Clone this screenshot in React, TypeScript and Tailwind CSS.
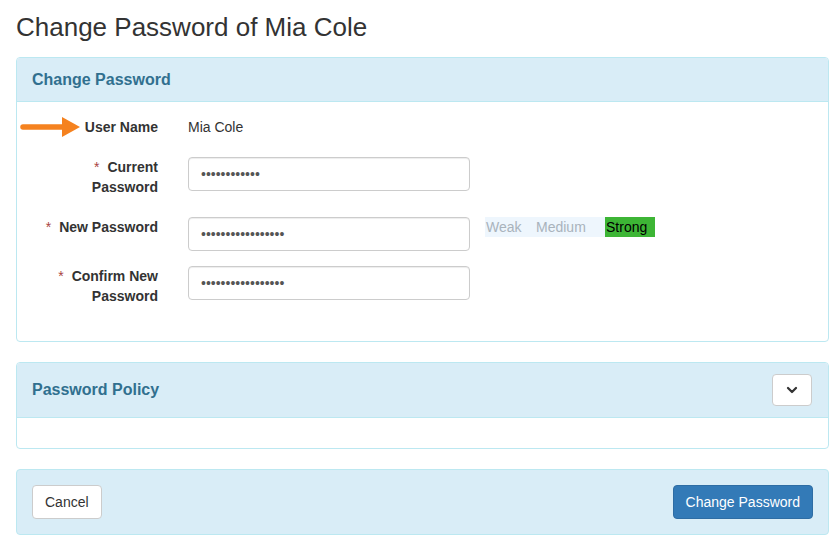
import React from 'react'
import { ChevronDown } from 'lucide-react'

const font = { fontFamily: '"Liberation Sans", Arial, Helvetica, sans-serif' }

function Req() {
    return <span className="text-[#a94442] font-normal mr-[8px]">*</span>
}

function PwInput({ value }: { value: string }) {
    return (
        <input
            type="password"
            value={value}
            readOnly
            className="w-[282px] h-[34px] px-[12px] border border-[#ccc] rounded-[4px] bg-white text-[14px] text-[#555] shadow-[inset_0_1px_1px_rgba(0,0,0,0.075)] outline-none"
        />
    )
}

export default function App() {
    return (
        <div className="bg-white text-[#333] text-[14px] leading-[20px] px-[16px] pt-[13px] pb-[9px] w-[845px]" style={font}>
            <h1 className="text-[26px] leading-[28px] font-normal mb-[16px]">Change Password of Mia Cole</h1>

            <div className="border border-[#bce8f1] rounded-[4px] w-[813px]">
                <div className="bg-[#d9edf7] h-[44px] border-b border-[#bce8f1] flex items-center px-[15px] rounded-t-[3px]">
                    <h3 className="text-[16px] font-bold text-[#31708f]">Change Password</h3>
                </div>
                <div className="pt-[15px] pb-[35px]">
                    <div className="flex items-start relative">
                        <svg className="absolute left-[2px] top-[0px]" width="62" height="20" viewBox="0 0 62 20">
                            <line x1="4" y1="10" x2="46" y2="10" stroke="#f5821f" strokeWidth="5.5" strokeLinecap="round" />
                            <polygon points="43,0 61,10 43,20" fill="#f5821f" />
                        </svg>
                        <label className="w-[141px] text-right font-bold">User Name</label>
                        <div className="ml-[30px]">Mia Cole</div>
                    </div>

                    <div className="flex items-start mt-[20px]">
                        <label className="w-[141px] text-right font-bold">
                            <Req />Current<br />Password
                        </label>
                        <div className="ml-[30px]"><PwInput value="currentpass1" /></div>
                    </div>

                    <div className="flex items-start mt-[20px]">
                        <label className="w-[141px] text-right font-bold">
                            <Req />New Password
                        </label>
                        <div className="ml-[30px] flex items-start">
                            <PwInput value="newpassword123456" />
                            <div className="flex ml-[15px] text-[14px] leading-[20px]">
                                <span className="w-[50px] bg-[#eef6fd] text-[#a9b3bc] pl-[1px]">Weak</span>
                                <span className="w-[70px] bg-[#eef6fd] text-[#a9b3bc] pl-[1px]">Medium</span>
                                <span className="w-[50px] bg-[#3db535] text-black pl-[1px]">Strong</span>
                            </div>
                        </div>
                    </div>

                    <div className="flex items-start mt-[15px]">
                        <label className="w-[141px] text-right font-bold">
                            <Req />Confirm New<br />Password
                        </label>
                        <div className="ml-[30px]"><PwInput value="newpassword123456" /></div>
                    </div>
                </div>
            </div>

            <div className="border border-[#bce8f1] rounded-[4px] w-[813px] mt-[20px]">
                <div className="bg-[#d9edf7] h-[55px] border-b border-[#bce8f1] flex items-center justify-between pl-[15px] pr-[16px] rounded-t-[3px]">
                    <h3 className="text-[16px] font-bold text-[#31708f]">Password Policy</h3>
                    <button className="w-[40px] h-[32px] bg-white border border-[#ccc] rounded-[4px] flex items-center justify-center text-[#333]">
                        <ChevronDown size={16} strokeWidth={3.4} />
                    </button>
                </div>
                <div className="h-[30px]"></div>
            </div>

            <div className="bg-[#d9edf7] border border-[#bce8f1] rounded-[4px] w-[813px] mt-[20px] px-[15px] py-[15px] flex justify-between">
                <button className="h-[34px] px-[12px] bg-white border border-[#ccc] rounded-[4px] text-[14px] text-[#333]">Cancel</button>
                <button className="h-[34px] px-[12px] bg-[#337ab7] border border-[#2e6da4] rounded-[4px] text-[14px] text-white">Change Password</button>
            </div>
        </div>
    )
}
